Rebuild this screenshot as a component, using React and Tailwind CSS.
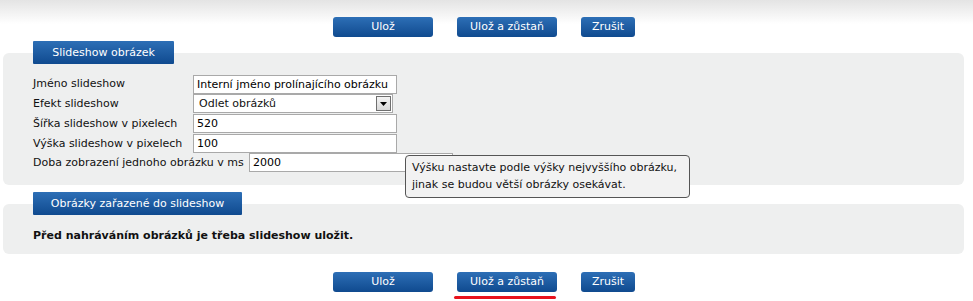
import React from "react";

const font = { fontFamily: '"DejaVu Sans", Verdana, sans-serif' };

function Btn({ children, w }) {
  return (
    <button
      className={`h-[20px] ${w} rounded-[3px] bg-gradient-to-b from-[#2d6fb6] to-[#0f4a8f] text-white text-[11px] leading-[20px] text-center`}
    >
      {children}
    </button>
  );
}

function Buttons() {
  return (
    <div className="flex pl-[333px] gap-[24px]">
      <Btn w="w-[100px]">Ulož</Btn>
      <Btn w="w-[100px]">Ulož a zůstaň</Btn>
      <Btn w="w-[54px]">Zrušit</Btn>
    </div>
  );
}

function Tab({ children, w }) {
  return (
    <div
      className={`relative z-10 ml-[33px] h-[23px] ${w} rounded-[1px] bg-gradient-to-b from-[#2d6fb6] to-[#0f4a8f] text-white text-[11px] leading-[23px] text-center`}
    >
      {children}
    </div>
  );
}

function Field({ value, w = "w-[204px]" }) {
  return (
    <div
      className={`h-[19px] ${w} border border-[#a9a9a9] bg-white px-[3px] text-[11px] leading-[17px] text-black whitespace-nowrap overflow-hidden`}
    >
      {value}
    </div>
  );
}

export default function App() {
  return (
    <div
      className="relative w-[973px] h-[301px] overflow-hidden bg-gradient-to-b from-[#e4e4e4] via-white via-[8%] to-white text-[#111]"
      style={font}
    >
      <div className="pt-[17px]">
        <Buttons />
      </div>

      <div className="mt-[4px]">
        <Tab w="w-[141px]">Slideshow obrázek</Tab>
        <div className="-mt-[11px] mx-[3px] w-[961px] h-[132px] rounded-[6px] bg-[#eeefef] pt-[22px] pl-[30px] text-[11px]">
          <div className="flex flex-col">
            <div className="flex h-[19px] items-center">
              <div className="w-[160px]">Jméno slideshow</div>
              <Field value="Interní jméno prolínajícího obrázku" />
            </div>
            <div className="flex h-[20px] items-start">
              <div className="w-[160px] leading-[19px]">Efekt slideshow</div>
              <div className="flex h-[19px] w-[200px] items-center justify-between border border-[#a9a9a9] bg-white pl-[5px] pr-[1px]">
                <span className="leading-[17px]">Odlet obrázků</span>
                <div className="flex h-[15px] w-[15px] items-center justify-center border border-[#6f6f6f] bg-gradient-to-b from-[#f4f4f4] to-[#d8d8d8]">
                  <svg width="7" height="4" viewBox="0 0 7 4">
                    <path d="M0 0H7L3.5 4Z" fill="#000" />
                  </svg>
                </div>
              </div>
            </div>
            <div className="flex h-[20px] items-start">
              <div className="w-[160px] leading-[19px]">Šířka slideshow v pixelech</div>
              <Field value="520" />
            </div>
            <div className="flex h-[19px] items-start">
              <div className="w-[160px] leading-[19px]">Výška slideshow v pixelech</div>
              <Field value="100" />
            </div>
            <div className="flex h-[19px] items-start">
              <div className="w-[216px] leading-[19px]">Doba zobrazení jednoho obrázku v ms</div>
              <Field value="2000" />
            </div>
          </div>
        </div>
      </div>

      <div className="mt-[7px]">
        <Tab w="w-[209px]">Obrázky zařazené do slideshow</Tab>
        <div className="-mt-[11px] mx-[3px] w-[961px] h-[50px] rounded-[6px] bg-[#eeefef] pt-[24px] pl-[30px] text-[11px] font-bold leading-[15px]">
          Před nahráváním obrázků je třeba slideshow uložit.
        </div>
      </div>

      <div className="mt-[18px]">
        <Buttons />
      </div>
      <div className="ml-[454px] mt-[4px] h-[3px] w-[102px] rounded-full bg-[#e8121d]" />

      <div className="absolute left-[405px] top-[155px] w-[285px] h-[43px] rounded-[4px] border border-[#555] bg-[#f2f2f2] px-[6px] pt-[3px] text-[11px] leading-[17px] text-[#111]">
        Výšku nastavte podle výšky nejvyššího obrázku,
        <br />
        jinak se budou větší obrázky osekávat.
      </div>
    </div>
  );
}
